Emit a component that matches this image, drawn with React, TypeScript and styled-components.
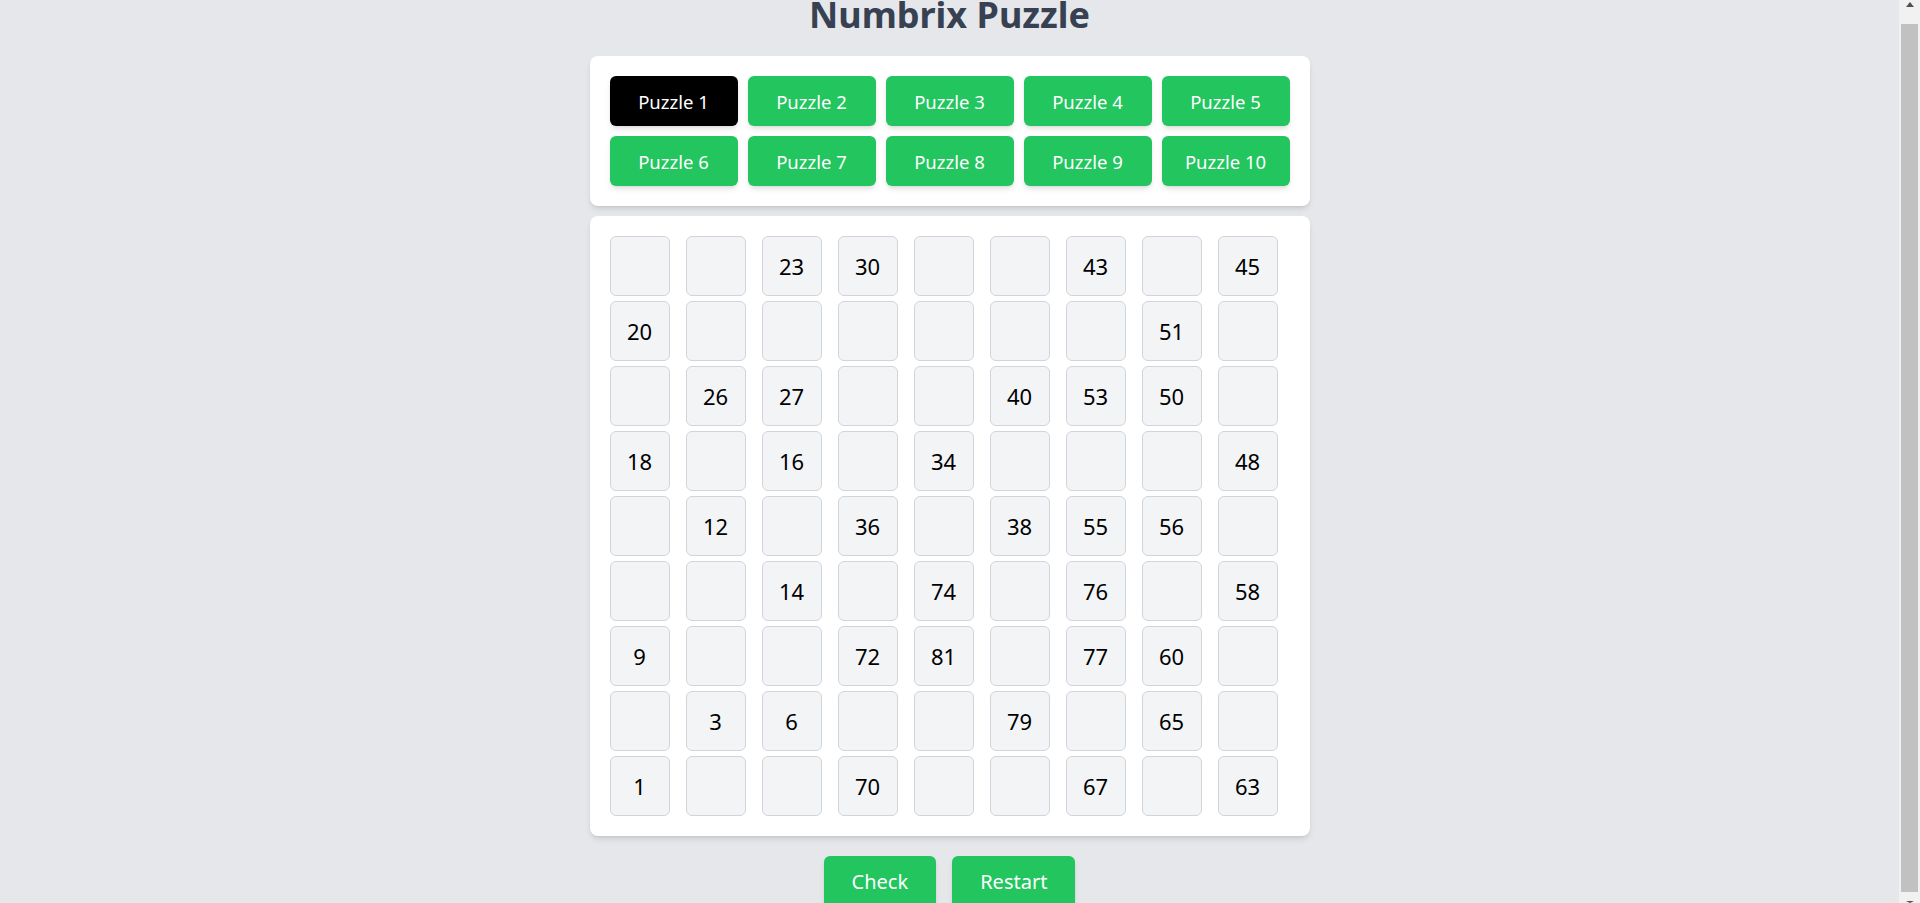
import { useState } from "react";
import styled, { createGlobalStyle } from "styled-components";

const GlobalStyle = createGlobalStyle`
    html, body {
        margin: 0;
        overflow: hidden;
    }
    body {
        background: #e5e7eb;
        font-family: "Noto Sans", "Open Sans", sans-serif;
    }
`;

const _ = 0;
const puzzle1 = [
    [_, _, 23, 30, _, _, 43, _, 45],
    [20, _, _, _, _, _, _, 51, _],
    [_, 26, 27, _, _, 40, 53, 50, _],
    [18, _, 16, _, 34, _, _, _, 48],
    [_, 12, _, 36, _, 38, 55, 56, _],
    [_, _, 14, _, 74, _, 76, _, 58],
    [9, _, _, 72, 81, _, 77, 60, _],
    [_, 3, 6, _, _, 79, _, 65, _],
    [1, _, _, 70, _, _, 67, _, 63],
];

export default function App() {
    const [selected, setSelected] = useState(1);
    const [values, setValues] = useState<number[][]>(puzzle1);

    const restart = () => setValues(puzzle1.map((r) => [...r]));

    return (
        <>
            <GlobalStyle />
            <Layout>
                <Page>
                    <Title>Numbrix Puzzle</Title>
                    <Card>
                        <PuzzleList>
                            {Array.from({ length: 10 }, (_x, i) => i + 1).map((n) => (
                                <PuzzleButton
                                    key={n}
                                    $active={n === selected}
                                    onClick={() => setSelected(n)}
                                >
                                    Puzzle {n}
                                </PuzzleButton>
                            ))}
                        </PuzzleList>
                    </Card>
                    <BoardCard>
                        <Board>
                            {values.map((row, r) =>
                                row.map((v, c) => (
                                    <Cell key={`${r}-${c}`}>{v ? v : ""}</Cell>
                                ))
                            )}
                        </Board>
                    </BoardCard>
                    <Actions>
                        <ActionButton>Check</ActionButton>
                        <ActionButton onClick={restart}>Restart</ActionButton>
                    </Actions>
                </Page>
                <ScrollRail>
                    <ArrowBox $up>
                        <Arrow $up />
                    </ArrowBox>
                    <Thumb />
                    <ArrowBox>
                        <Arrow />
                    </ArrowBox>
                </ScrollRail>
            </Layout>
        </>
    );
}

const Layout = styled.div`
    display: flex;
    height: 100vh;
`;

const Page = styled.div`
    flex: 1;
    display: flex;
    flex-direction: column;
    align-items: center;
`;

const Title = styled.h1`
    margin: 0 0 26px;
    font-size: 36px;
    line-height: 30px;
    font-weight: 700;
    color: #374151;
`;

const Card = styled.div`
    width: 720px;
    box-sizing: border-box;
    padding: 20px;
    background: #ffffff;
    border-radius: 8px;
    box-shadow: 0 4px 6px -1px rgba(0, 0, 0, 0.1), 0 2px 4px -2px rgba(0, 0, 0, 0.1);
`;

const BoardCard = styled(Card)`
    margin-top: 10px;
`;

const PuzzleList = styled.div`
    display: grid;
    grid-template-columns: repeat(5, 128px);
    gap: 10px;
`;

const PuzzleButton = styled.button<{ $active: boolean }>`
    height: 50px;
    border: none;
    border-radius: 6px;
    background: ${(p) => (p.$active ? "#000000" : "#22c55e")};
    color: #ffffff;
    font-family: inherit;
    font-size: 18.5px;
    cursor: pointer;
    box-shadow: 0 4px 6px -1px rgba(0, 0, 0, 0.1), 0 2px 4px -2px rgba(0, 0, 0, 0.1);
`;

const Board = styled.div`
    display: grid;
    grid-template-columns: repeat(9, 60px);
    column-gap: 16px;
    row-gap: 5px;
`;

const Cell = styled.div`
    width: 60px;
    height: 60px;
    box-sizing: border-box;
    display: flex;
    align-items: center;
    justify-content: center;
    border: 1px solid #d1d5db;
    border-radius: 6px;
    background: #f3f4f6;
    color: #000000;
    font-size: 22px;
`;

const Actions = styled.div`
    display: flex;
    gap: 16px;
    margin-top: 20px;
    flex-shrink: 0;
`;

const ActionButton = styled.button`
    padding: 12px 28px;
    border: none;
    border-radius: 6px;
    background: #22c55e;
    color: #ffffff;
    font-family: inherit;
    font-size: 20px;
    line-height: 28px;
    cursor: pointer;
    box-shadow: 0 4px 6px -1px rgba(0, 0, 0, 0.1), 0 2px 4px -2px rgba(0, 0, 0, 0.1);
`;

const ScrollRail = styled.div`
    width: 21px;
    flex-shrink: 0;
    display: flex;
    flex-direction: column;
    background: #f1f1f1;
`;

const ArrowBox = styled.div<{ $up?: boolean }>`
    height: ${(p) => (p.$up ? "24px" : "11px")};
    display: flex;
    justify-content: center;
    align-items: ${(p) => (p.$up ? "flex-start" : "flex-end")};
    padding: ${(p) => (p.$up ? "2px 0 0" : "0")};
    box-sizing: border-box;
`;

const Arrow = styled.div<{ $up?: boolean }>`
    width: 0;
    height: 0;
    border-left: 4.5px solid transparent;
    border-right: 4.5px solid transparent;
    ${(p) =>
        p.$up
            ? "border-bottom: 5px solid #505050;"
            : "border-top: 2px solid #505050;"}
`;

const Thumb = styled.div`
    flex: 1;
    margin: 0 2px;
    background: #c1c1c1;
`;
